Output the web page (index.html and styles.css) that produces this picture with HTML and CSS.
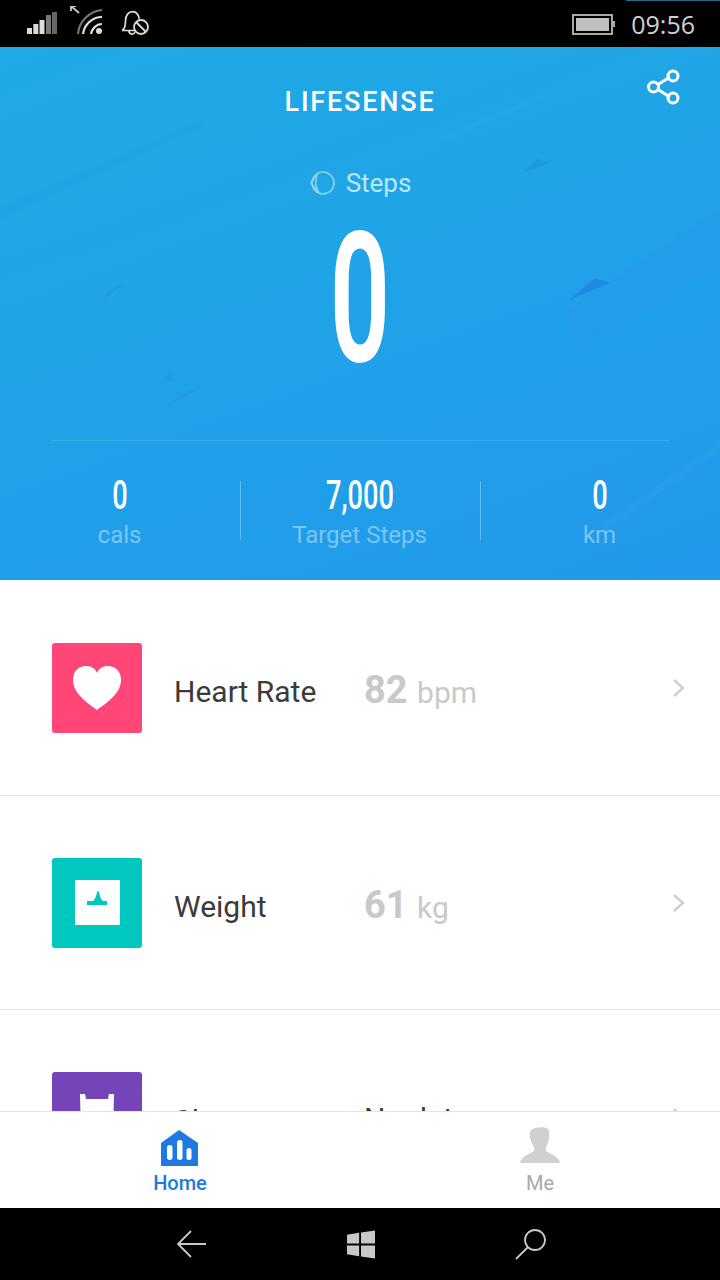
FILE: index.html
```html
<!DOCTYPE html>
<html>
<head>
    <title>Lifesense</title>
    <link rel="stylesheet" href="styles.css">
</head>
<body>
    <div class="phone">
        <div class="status-bar">
            <div class="status-left">
                <svg width="32" height="32" viewBox="0 0 32 32">
                    <rect x="1" y="22" width="5" height="6" fill="#dcdcdc"/>
                    <rect x="7.300" y="18" width="5" height="10" fill="#dcdcdc"/>
                    <rect x="13.500" y="14" width="5" height="14" fill="#dcdcdc"/>
                    <rect x="20" y="9" width="5" height="19" fill="#777"/>
                    <rect x="26" y="6" width="5" height="22" fill="#666"/>
                </svg>
                <svg width="36" height="32" viewBox="0 0 36 32">
                    <path d="M1 0 L9 7 M1 0 H6 M1 0 V5" stroke="#c8c8c8" stroke-width="1.800" fill="none"/>
                    <path d="M8 28 C9 15 20 5 32 4" stroke="#777" stroke-width="2.200" fill="none"/>
                    <path d="M13 28 C14 19 22 11 32 11" stroke="#dcdcdc" stroke-width="2.200" fill="none"/>
                    <path d="M21 28 C22 23 26 18 32 18" stroke="#dcdcdc" stroke-width="2.200" fill="none"/>
                    <circle cx="29" cy="25" r="3" fill="#dcdcdc"/>
                </svg>
                <svg width="30" height="32" viewBox="0 0 30 32">
                    <path d="M1 24.500 C4 23 4.500 20 4.500 15 C4.500 9 7.500 5.700 11.700 5.700 C15.500 5.700 18 9 18 13" stroke="#dcdcdc" stroke-width="1.700" fill="none"/>
                    <path d="M1 24.500 H14 M8 25 C8 29 13 29 14 26" stroke="#dcdcdc" stroke-width="1.700" fill="none"/>
                    <circle cx="20" cy="21" r="7" stroke="#dcdcdc" stroke-width="1.800" fill="none"/>
                    <path d="M15 16 L25 26" stroke="#dcdcdc" stroke-width="1.800"/>
                </svg>
            </div>
            <div class="status-right">
                <div class="battery-wrap">
                    <div class="battery"><div class="battery-fill"></div></div>
                    <div class="battery-nub"></div>
                </div>
                <span class="clock">09:56</span>
            </div>
        </div>

        <div class="header">
            <svg class="streaks" width="720" height="533" viewBox="0 0 720 533">
                <polygon points="0,160 202,73 205,78 0,172" fill="#1b8fd6" opacity="0.05"/>
                <polygon points="440,90 540,47 545,50 445,95" fill="#5fc4f0" opacity="0.06"/>
                <polygon points="565,265 720,160 720,215 580,300" fill="#2f8df0" opacity="0.12"/>
                <polygon points="569,253 610,236 595,231" fill="#1f84de" opacity="0.75"/>
                <polygon points="101,253 126,236 110,243" fill="#2b8be8" opacity="0.5"/>
                <polygon points="165,361 204,338 180,348" fill="#2b8be8" opacity="0.4"/>
                <polygon points="523,126 551,115 537,112" fill="#1f84de" opacity="0.35"/>
                <circle cx="169" cy="331" r="4" fill="#2b8be8" opacity="0.4"/>
                <polygon points="600,480 720,395 720,402 606,484" fill="#5fc4f0" opacity="0.06"/>
            </svg>
            <div class="top-row">
                <div class="logo">LIFESENSE</div>
                <svg class="share" width="36" height="36" viewBox="0 0 36 36">
                    <path d="M11 16 L24 8 M11 20 L24 28" stroke="#fff" stroke-width="3"/>
                    <circle cx="7.500" cy="18" r="5" stroke="#fff" stroke-width="3" fill="none"/>
                    <circle cx="27" cy="7" r="5" stroke="#fff" stroke-width="3" fill="none"/>
                    <circle cx="27" cy="29" r="5" stroke="#fff" stroke-width="3" fill="none"/>
                </svg>
            </div>
            <div class="steps-label">
                <svg width="26" height="26" viewBox="0 0 26 26">
                    <circle cx="14" cy="13" r="11" stroke="#8fd3f4" stroke-width="1.600" fill="none"/>
                    <path d="M8 3.500 L2 13 L10 23 M8 3.500 L6.500 14 L10 23" stroke="#8fd3f4" stroke-width="1.600" fill="none"/>
                </svg>
                <span>Steps</span>
            </div>
            <div class="big-number"><span>0</span></div>
            <div class="stats-line"></div>
            <div class="stats">
                <div class="stat">
                    <div class="stat-value"><span>0</span></div>
                    <div class="stat-label">cals</div>
                </div>
                <div class="stat">
                    <div class="stat-value"><span>7,000</span></div>
                    <div class="stat-label">Target Steps</div>
                </div>
                <div class="stat">
                    <div class="stat-value"><span>0</span></div>
                    <div class="stat-label">km</div>
                </div>
            </div>
        </div>

        <div class="list">
            <div class="row">
                <div class="tile tile-heart">
                    <svg width="50" height="44" viewBox="0 0 50 44">
                        <path d="M25 44 C17 38 1 28 1 14 C1 5 7 0 14 0 C19 0 23 2 25 7 C27 2 31 0 36 0 C43 0 49 5 49 14 C49 28 33 38 25 44 Z" fill="#fff"/>
                    </svg>
                </div>
                <div class="row-name">Heart Rate</div>
                <div class="row-value"><b>82</b> bpm</div>
                <svg class="chevron" width="14" height="20" viewBox="0 0 14 20">
                    <path d="M2 2 L11 10 L2 18" stroke="#cfcfcf" stroke-width="2.400" fill="none"/>
                </svg>
            </div>
            <div class="row">
                <div class="tile tile-weight">
                    <div class="scale">
                        <svg width="20" height="14" viewBox="0 0 20 14">
                            <path d="M0 10 H6 C8 9 9.500 4 10 1 Q11 -1 12 1 C12.500 4 14 9 16 10 H20 V14 H0 Z" fill="#00c8be"/>
                        </svg>
                    </div>
                </div>
                <div class="row-name">Weight</div>
                <div class="row-value"><b>61</b> kg</div>
                <svg class="chevron" width="14" height="20" viewBox="0 0 14 20">
                    <path d="M2 2 L11 10 L2 18" stroke="#cfcfcf" stroke-width="2.400" fill="none"/>
                </svg>
            </div>
            <div class="row">
                <div class="tile tile-sleep">
                    <svg width="36" height="40" viewBox="0 0 36 40">
                        <path d="M1 0 H6 L7 5 H29 L30 0 H35 L34 40 H2 Z" fill="#fff"/>
                    </svg>
                </div>
                <div class="row-name">Sleep</div>
                <div class="row-value row-value-dark">No data</div>
                <svg class="chevron" width="14" height="20" viewBox="0 0 14 20">
                    <path d="M2 2 L11 10 L2 18" stroke="#cfcfcf" stroke-width="2.400" fill="none"/>
                </svg>
            </div>
        </div>

        <div class="tabs">
            <div class="tab tab-active">
                <svg width="40" height="44" viewBox="0 0 40 44">
                    <path d="M19 3 L38 16 V39 H1 V16 Z" fill="#2079e0"/>
                    <rect x="7" y="18" width="5.500" height="15" rx="2.700" fill="#fff"/>
                    <rect x="17" y="13" width="5.500" height="20" rx="2.700" fill="#fff"/>
                    <rect x="26.500" y="21" width="5" height="12" rx="2.500" fill="#fff"/>
                </svg>
                <span>Home</span>
            </div>
            <div class="tab">
                <svg width="40" height="44" viewBox="0 0 40 44">
                    <path d="M11 3 C14 0 25 -1 28 2 C30 5 29.500 11 28.500 14 C27.500 18 25.500 20 25.500 23 C27 27 38 27 40 36 H0 C2 27 13 27 14.500 23 C14.500 20 12 18 11 14 C10 11 9 6 11 3 Z" fill="#d0d0d0"/>
                </svg>
                <span>Me</span>
            </div>
        </div>

        <div class="nav-bar">
            <svg width="31" height="28" viewBox="0 0 31 28">
                <path d="M30 14 H2 M15 1 L2 14 L15 27" stroke="#c8c8c8" stroke-width="1.800" fill="none"/>
            </svg>
            <svg width="28" height="29" viewBox="0 0 30 30">
                <path d="M0 4.500 L13 2.500 V14 H0 Z M15 2.200 L30 0 V14 H15 Z M0 16 H13 V27.500 L0 25.500 Z M15 16 H30 V30 L15 27.800 Z" fill="#c8c8c8"/>
            </svg>
            <svg width="32" height="32" viewBox="0 0 32 32">
                <circle cx="20" cy="12" r="10" stroke="#c8c8c8" stroke-width="1.800" fill="none"/>
                <path d="M13 19 L1 31" stroke="#c8c8c8" stroke-width="1.800"/>
            </svg>
        </div>
    </div>
</body>
</html>
```
FILE: styles.css
```css
* {
    box-sizing: border-box;
}

body {
    margin: 0;
    font-family: Roboto, Arial, sans-serif;
    background: #000;
}

.phone {
    width: 720px;
    height: 1280px;
    display: flex;
    flex-direction: column;
    overflow: hidden;
    background: #fff;
}

.status-bar {
    position: relative;
    height: 47px;
    flex: none;
    background: #000;
    display: flex;
    justify-content: space-between;
    align-items: flex-start;
    padding: 6px 25px 0 26px;
}

/* thin progress line at the very top */
.status-bar::after {
    content: "";
    position: absolute;
    right: 0;
    top: 0;
    width: 94px;
    height: 1px;
    background: #2a6a8a;
}

.status-left {
    display: flex;
    gap: 12px;
}

.status-left svg:last-child {
    margin-left: 3px;
}

.status-right {
    display: flex;
    align-items: center;
    gap: 16px;
    height: 36px;
}

.battery-wrap {
    display: flex;
    align-items: center;
}

.battery {
    width: 41px;
    height: 21px;
    border: 2px solid #a8a8a8;
    padding: 2px;
}

.battery-fill {
    width: 100%;
    height: 100%;
    background: #c0c0c0;
}

.battery-nub {
    width: 2px;
    height: 6px;
    background: #a8a8a8;
}

.clock {
    color: #d0d0d0;
    font-family: "Open Sans", sans-serif;
    font-size: 25px;
    line-height: 30px;
}

.header {
    position: relative;
    height: 533px;
    flex: none;
    overflow: hidden;
    background: linear-gradient(160deg, #1faae4 0%, #20a0e9 60%, #2299ea 100%);
    display: flex;
    flex-direction: column;
    align-items: center;
}

.streaks {
    position: absolute;
    left: 0;
    top: 0;
}

.top-row {
    position: relative;
    width: 100%;
    display: flex;
    justify-content: center;
    padding-top: 40px;
}

.logo {
    color: #fff;
    font-size: 27px;
    line-height: 30px;
    font-weight: 500;
    letter-spacing: 1.8px;
}

.share {
    position: absolute;
    right: 38px;
    top: 22px;
}

.steps-label {
    position: relative;
    display: flex;
    align-items: center;
    gap: 11px;
    margin-top: 47px;
    height: 38px;
    color: #bce6f9;
    font-size: 26px;
}

.big-number {
    position: relative;
    height: 166px;
    margin-top: 14px;
    color: #fff;
    font-size: 182px;
    font-weight: 600;
    line-height: 166px;
}

.big-number span {
    display: block;
    transform: scaleX(0.58);
}

.stats-line {
    position: relative;
    width: 620px;
    height: 1px;
    flex: none;
    margin-top: 58px;
    background: rgba(255, 255, 255, 0.1);
}

.stats {
    position: relative;
    width: 100%;
    margin-left: -1px;
    padding-top: 40px;
    display: grid;
    grid-template-columns: repeat(3, 240px);
}

.stat {
    height: 59px;
    text-align: center;
    box-shadow: inset 1px 0 0 rgba(255, 255, 255, 0.3);
}

.stat:first-child {
    box-shadow: none;
}

.stat-value {
    color: #fff;
    font-size: 40px;
    font-weight: 500;
    line-height: 30px;
    height: 30px;
}

.stat-value span {
    display: block;
    transform: scaleX(0.68);
}

.stat-label {
    color: #7cc5f5;
    font-size: 24px;
    line-height: 28px;
    margin-top: 10px;
}

.list {
    height: 531px;
    flex: none;
    overflow: hidden;
    padding-top: 1px;
}

.row {
    height: 214.500px;
    display: flex;
    align-items: flex-start;
    padding: 62px 34px 0 52px;
    border-bottom: 1px solid #e4e4e4;
}

.tile {
    width: 90px;
    height: 90px;
    flex: none;
    border-radius: 3px;
    display: flex;
    align-items: center;
    justify-content: center;
}

.tile-heart {
    background: #ff4677;
}

.tile-weight {
    background: #00c8be;
}

.tile-sleep {
    background: #7444b8;
    align-items: flex-start;
    padding-top: 22px;
}

.scale {
    width: 45px;
    height: 45px;
    background: #fff;
    display: flex;
    align-items: center;
    justify-content: center;
}

.scale svg {
    margin-bottom: 10px;
}

.row-name {
    width: 190px;
    margin-left: 32px;
    color: #3b3b3b;
    font-size: 30px;
    line-height: 34px;
    margin-top: 32px;
    flex: none;
}

.row-value {
    flex: 1;
    color: #c9c9c9;
    font-size: 30px;
    line-height: 34px;
    margin-top: 30px;
}

.row-value b {
    font-size: 38px;
    font-weight: 700;
    margin-right: 2px;
}

.row-value-dark {
    color: #3b3b3b;
}

.chevron {
    margin-top: 35px;
}

.tabs {
    height: 97px;
    flex: none;
    background: #fff;
    border-top: 1px solid #e4e4e4;
    display: flex;
}

.tab {
    width: 360px;
    padding-top: 15px;
    display: flex;
    flex-direction: column;
    align-items: center;
    color: #a8a8a8;
    font-size: 20px;
    line-height: 24px;
}

.tab-active {
    color: #2079e0;
    font-weight: 500;
}

.nav-bar {
    height: 72px;
    flex: none;
    background: #000;
    display: flex;
    justify-content: center;
    align-items: center;
    gap: 140px;
    padding-left: 2px;
}
```
